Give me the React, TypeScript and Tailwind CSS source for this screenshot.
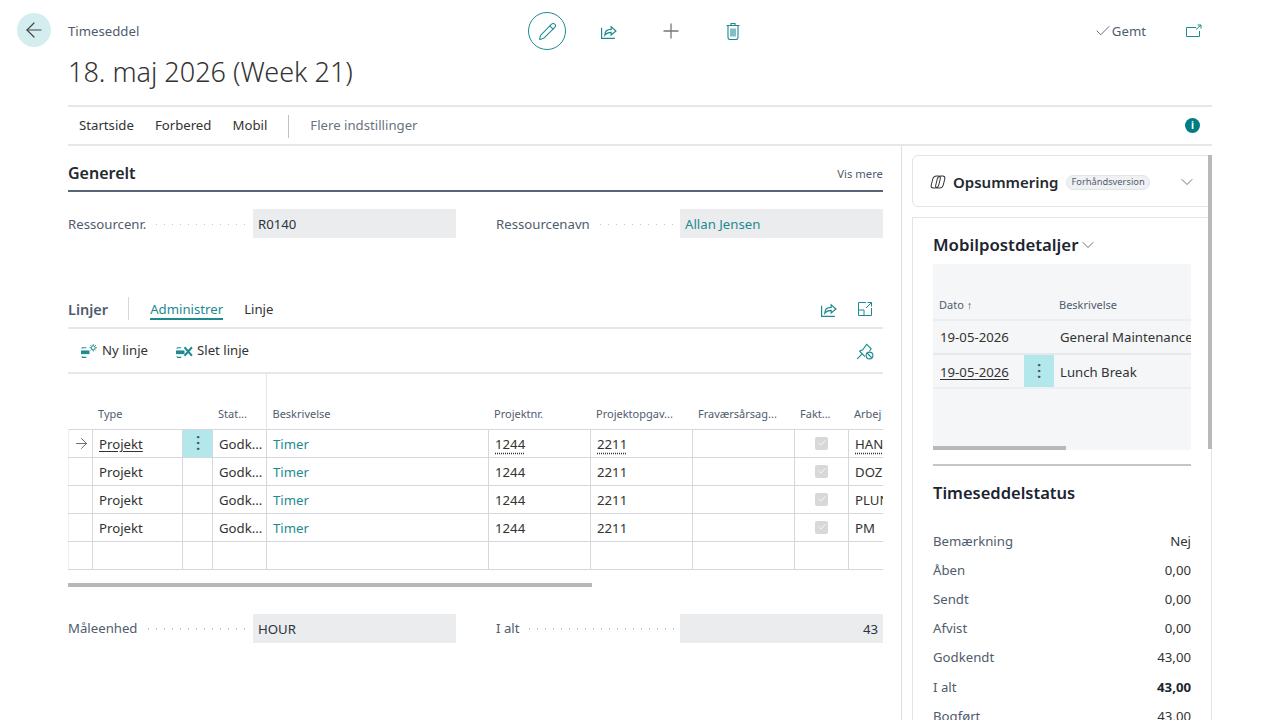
import { Check, ChevronDown, Plus, Pencil, ArrowLeft, ArrowRight, EllipsisVertical } from 'lucide-react'

const TEAL = 'text-[#1d8a90]'

const COLS = [24, 90, 30, 54, 222, 102, 102, 102, 54, 60]
const HEADS = ['', 'Type', '', 'Stat...', 'Beskrivelse', 'Projektnr.', 'Projektopgav...', 'Fraværsårsag...', 'Fakt...', 'Arbej']
const ROWS = ['HAN', 'DOZ', 'PLUN', 'PM']
const STATUS = [
  { label: 'Bemærkning', value: 'Nej' },
  { label: 'Åben', value: '0,00' },
  { label: 'Sendt', value: '0,00' },
  { label: 'Afvist', value: '0,00' },
  { label: 'Godkendt', value: '43,00' },
  { label: 'I alt', value: '43,00', bold: true },
  { label: 'Bogført', value: '43,00' },
]

function ShareIcon({ className = '' }: { className?: string }) {
  return (
    <svg viewBox="0 0 16 16" className={'w-[17px] h-[17px] ' + className} fill="none" stroke="currentColor" strokeWidth="1.100">
      <path d="M1.500 4.500v10h12.500" />
      <path d="M4.500 11.500c0-3.500 2.500-5.500 6-5.500V3.500l4.500 4-4.500 3.800V8.800c-2.500 0-4.500.8-6 2.700z" />
    </svg>
  )
}

function LineIcon({ remove }: { remove?: boolean }) {
  return (
    <svg viewBox="0 0 16 14" className="w-[17px] h-[15px] text-[#1d8a90]" fill="none" stroke="currentColor" strokeWidth="1">
      <path d="M1 3.500h4M1 12.500h4M1 3.500v1M1 11.500v1" />
      <rect x="0.500" y="6.500" width="7" height="2.500" fill="currentColor" />
      {remove ? (
        <path d="M8 3l7 8M15 3l-7 8" strokeWidth="1.800" />
      ) : (
        <g strokeWidth="0.900">
          <circle cx="11.500" cy="3.500" r="1.800" />
          <path d="M11.500 0v1.500M11.500 5.500V7M8 3.500h1.500M13.500 3.500H15M9 1l1 1M13 5l1 1M14 1l-1 1M10 5l-1 1" />
        </g>
      )}
    </svg>
  )
}

function Field({ label, value, link, right }: { label: string; value: string; link?: boolean; right?: boolean }) {
  return (
    <div className="flex items-center">
      <span className="text-[#505c6d] whitespace-nowrap pt-[2px]">{label}</span>
      <span className="flex-1 ml-[10px] mr-[6px] h-[1.500px] mt-[2px] bg-[repeating-linear-gradient(90deg,#c4c6cc_0_1.500px,transparent_1.500px_8px)]" />
      <div className={'w-[203px] h-[29px] pt-[3px] bg-[#ebecee] flex items-center px-[5px] ' + (right ? 'justify-end ' : '') + (link ? TEAL : 'text-[#2b3440]')}>
        {value}
      </div>
    </div>
  )
}

function LinesTable() {
  return (
    <div className="w-[815px] overflow-hidden">
      <table className="table-fixed border-collapse w-[840px] text-[#333]">
        <colgroup>
          {COLS.map((w, i) => (
            <col key={i} style={{ width: w }} />
          ))}
        </colgroup>
        <thead>
          <tr className="h-[55px]">
            {HEADS.map((h, i) => (
              <th
                key={i}
                className={
                  'align-bottom pb-[6px] pl-[5.500px] text-left font-normal text-[11px] text-[#505c6d] whitespace-nowrap overflow-hidden ' +
                  (i === 3 ? 'border-r border-[#e3e5e8]' : '')
                }
              >
                {h}
              </th>
            ))}
          </tr>
        </thead>
        <tbody>
          {[0, 1, 2, 3, 4].map((r) => {
            const filled = r < 4
            const cur = r === 0
            const cell = 'h-[28px] border border-[#d5d7dd] pl-[6px] pt-[4px] whitespace-nowrap overflow-hidden leading-none'
            const dotted = cur ? 'underline decoration-dotted underline-offset-[3px]' : ''
            return (
              <tr key={r}>
                <td className={cell + ' border-l-[#eceef0] !pl-[4px] !pt-0'}>
                  {cur && <ArrowRight size={17} strokeWidth={1.200} className="text-[#555]" />}
                </td>
                <td className={cell}>{filled && <span className={cur ? 'underline underline-offset-2' : ''}>Projekt</span>}</td>
                <td className={cell + (cur ? ' bg-[#b2e8ec] !pl-0 !pt-0' : '')}>
                  {cur && <EllipsisVertical size={20} strokeWidth={1} className="mx-auto text-[#333]" />}
                </td>
                <td className={cell}>{filled && 'Godk...'}</td>
                <td className={cell + ' ' + TEAL}>{filled && 'Timer'}</td>
                <td className={cell}>{filled && <span className={dotted}>1244</span>}</td>
                <td className={cell}>{filled && <span className={dotted}>2211</span>}</td>
                <td className={cell} />
                <td className={cell + ' !pl-0 !pt-0'}>
                  {filled && (
                    <span className="mx-auto w-[13px] h-[13px] rounded-[2px] bg-[#d8d8d8] flex items-center justify-center">
                      <Check size={10} strokeWidth={2} className="text-white" />
                    </span>
                  )}
                </td>
                <td className={cell}>{filled && <span className={dotted}>{ROWS[r]}</span>}</td>
              </tr>
            )
          })}
        </tbody>
      </table>
    </div>
  )
}

function SidePanel() {
  return (
    <aside className="relative w-[311px] ml-[18px] pt-[9px] border-l border-[#dcdee2] pl-[10px] h-[574px] overflow-hidden">
      {/* scrollbar */}
      <div className="absolute right-0 top-[9px] w-[4px] h-[294px] bg-[#b8b8b8]" />
      <div className="w-[300px] h-[52px] rounded-[6px] border border-[#e3e4e8] flex items-center pl-[16px] pt-[2px]">
        <svg viewBox="0 0 18 16" className="w-[18px] h-[16px] -mt-[1px] text-[#333]" fill="none" stroke="currentColor" strokeWidth="1">
          <rect x="3" y="2" width="7.500" height="12" rx="3" transform="skewX(-14) translate(2 0)" />
          <rect x="7.500" y="2" width="7.500" height="12" rx="3" transform="skewX(-14) translate(2 0)" />
        </svg>
        <span className="ml-[6px] text-[15px] font-semibold text-[#24292f]">Opsummering</span>
        <span className="ml-[8px] h-[15px] px-[4px] rounded-full bg-[#f0f1f3] border border-[#e2e3e7] text-[9.300px] text-[#505c6d] flex items-center">
          Forhåndsversion
        </span>
        <ChevronDown size={20} strokeWidth={1} className="ml-[27px] -mt-[1px] text-[#555]" />
      </div>
      <div className="mt-[10px] w-[300px] border border-[#e3e4e8] pl-[20px] pr-[20px] pt-[13px]">
        <div className="flex items-center h-[28px]">
          <span className="text-[16.800px] font-semibold text-[#1c2430]">Mobilpostdetaljer</span>
          <ChevronDown size={20} strokeWidth={1} className="text-[#555]" />
        </div>
        <div className="relative mt-[5px] h-[186px] bg-[#f5f6f8] text-[#333]">
          <div className="h-[57px] flex items-end border-b-2 border-[#eceef0] text-[11px] text-[#505c6d]">
            <span className="w-[126px] pl-[6px] pb-[6px]">Dato ↑</span>
            <span className="pb-[6px]">Beskrivelse</span>
          </div>
          <div className="h-[34px] pt-[2px] flex items-center border-b-2 border-[#e7e8eb] whitespace-nowrap overflow-hidden">
            <span className="w-[127px] pl-[7px] shrink-0">19-05-2026</span>
            <span className="shrink-0">General Maintenance</span>
          </div>
          <div className="h-[34px] flex items-center border-b-2 border-[#eceef0] whitespace-nowrap overflow-hidden">
            <span className="w-[91px] pl-[7px] pt-[3px] underline underline-offset-2 shrink-0">19-05-2026</span>
            <span className="w-[30px] h-full bg-[#b2e8ec] flex items-center justify-center shrink-0">
              <EllipsisVertical size={20} strokeWidth={1} />
            </span>
            <span className="ml-[6px] pt-[3px]">Lunch Break</span>
          </div>
          <div className="absolute left-0 bottom-0 w-[133px] h-[4px] bg-[#b8b8b8]" />
        </div>
        <div className="mt-[14px] h-[2px] bg-[#c4c5c9]" />
        <div className="mt-[14px] h-[26px] flex items-center text-[16.500px] font-semibold text-[#1c2430]">Timeseddelstatus</div>
        <div className="mt-[21px] flex flex-col">
          {STATUS.map((s) => (
            <div key={s.label} className="h-[29.200px] flex items-center justify-between">
              <span className="text-[#505c6d]">{s.label}</span>
              <span className={s.bold ? 'font-bold text-[#1c2430]' : 'text-[#333]'}>{s.value}</span>
            </div>
          ))}
        </div>
      </div>
    </aside>
  )
}

export default function App() {
  return (
    <div className="w-[1280px] h-[720px] overflow-hidden bg-white flex text-[13.200px] [font-family:'Noto_Sans',sans-serif]">
      <div className="w-[68px] pl-[17px] pt-[13px] shrink-0">
        <button className="w-[34px] h-[34px] rounded-full bg-[#d4eef0] flex items-center justify-center">
          <ArrowLeft size={24} strokeWidth={1.200} className="text-[#444]" />
        </button>
      </div>

      <div className="w-[1144px] shrink-0">
        {/* page header */}
        <div className="relative h-[107px] border-b-2 border-[#e6e7ea]">
          <div className="pt-[22px] text-[#505c6d] leading-[18px]">Timeseddel</div>
          <h1 className="mt-[12px] text-[27px] font-light leading-[40px] text-[#333]">18. maj 2026 (Week 21)</h1>
          <div className="absolute left-[460px] top-[12px] flex items-center">
            <button className="w-[38px] h-[38px] rounded-full border border-[#1d8a90] flex items-center justify-center">
              <Pencil size={19} strokeWidth={1.300} className={TEAL} />
            </button>
            <ShareIcon className={'ml-[34px] ' + TEAL} />
            <Plus size={24} strokeWidth={1.300} className="ml-[42px] text-[#777]" />
            <svg viewBox="0 0 14 18" className={'ml-[43px] w-[14px] h-[18px] ' + TEAL} fill="none" stroke="currentColor" strokeWidth="1.100">
              <path d="M.5 3.500h13M5 3.500V1.500h4v2M2 3.500v12a2 2 0 0 0 2 2h6a2 2 0 0 0 2-2v-12M5 6.500v8M7 6.500v8M9 6.500v8" />
            </svg>
          </div>
          <div className="absolute right-[10px] top-[22px] flex items-center text-[#505c6d] leading-[18px]">
            <Check size={18} strokeWidth={1.200} />
            <span>Gemt</span>
            <svg viewBox="0 0 16 14" className={'ml-[40px] w-4 h-[14px] ' + TEAL} fill="none" stroke="currentColor">
              <path d="M10 3.500H.5v9h13V7M10 5.500 15 1M11.500 1H15v3.500" />
            </svg>
          </div>
        </div>

        {/* action bar */}
        <div className="h-[39px] pt-[1px] border-b-2 border-[#e6e7ea] flex items-center pl-[11px] text-[#333] relative">
          <span>Startside</span>
          <span className="ml-[21px]">Forbered</span>
          <span className="ml-[21px]">Mobil</span>
          <span className="ml-[21px] w-px h-[23px] bg-[#bfc1c6]" />
          <span className="ml-[21px] text-[#6a7280]">Flere indstillinger</span>
          <span className="ml-auto mr-[12px] -mt-[1px] w-[15px] h-[15px] rounded-full bg-[#007c83] text-white flex items-center justify-center text-[10px] font-bold">i</span>
        </div>

        <div className="flex">
          <main className="w-[815px] shrink-0">
            <div className="mt-[12px] h-[34px] pb-[2px] border-b-2 border-[#5a6478] flex items-center justify-between">
              <span className="text-[16px] font-semibold text-[#24292f]">Generelt</span>
              <span className="text-[11.300px] text-[#505c6d] pt-[2px]">Vis mere</span>
            </div>
            <div className="mt-[17px] grid grid-cols-[388px_387px] gap-x-[40px]">
              <Field label="Ressourcenr." value="R0140" />
              <Field label="Ressourcenavn" value="Allan Jensen" link />
            </div>

            <div className="mt-[58px] h-[33px] border-b-2 border-[#e6e7ea] flex items-start">
              <span className="text-[14.500px] font-semibold text-[#505c6d] leading-[26px]">Linjer</span>
              <span className="ml-[20px] mt-[1px] w-px h-[23px] bg-[#d5d7dd]" />
              <span className={'ml-[21px] mt-[3px] h-[21px] leading-[21px] border-b-2 border-[#1d8a90] ' + TEAL}>Administrer</span>
              <span className="ml-[21px] mt-[3px] leading-[21px] text-[#333]">Linje</span>
              <ShareIcon className={'ml-auto mt-[5px] ' + TEAL} />
              <svg viewBox="0 0 16 16" className={'ml-[20px] mr-[10px] mt-[5px] w-4 h-4 ' + TEAL} fill="none" stroke="currentColor">
                <path d="M9 1.500H1.500v13h13V7M1.500 9H7v5.500M9 7l5.500-5.500M10.500 1.500h4V5.500" />
              </svg>
            </div>

            <div className="h-[45px] pt-[1px] border-b-2 border-[#e6e7ea] flex items-center pl-[13px] text-[#333]">
              <LineIcon />
              <span className="ml-[4px]">Ny linje</span>
              <span className="ml-[28px]"><LineIcon remove /></span>
              <span className="ml-[4px]">Slet linje</span>
              <svg viewBox="0 0 16 16" className={'ml-auto mr-[9px] w-[18px] h-[18px] ' + TEAL} fill="none" stroke="currentColor" strokeWidth="1">
                <path d="M1 15l4.500-4.500M3 8l3-1 3.500-5 4 4-1.500 2M3 8l5 5" />
                <circle cx="12" cy="12" r="3" />
                <path d="M10 10l4 4" />
              </svg>
            </div>

            <LinesTable />
            <div className="mt-[13px] w-[524px] h-[4px] bg-[#b8b8b8]" />

            <div className="mt-[27px] grid grid-cols-[388px_387px] gap-x-[40px]">
              <Field label="Måleenhed" value="HOUR" />
              <Field label="I alt" value="43" right />
            </div>
          </main>
          <SidePanel />
        </div>
      </div>
    </div>
  )
}
